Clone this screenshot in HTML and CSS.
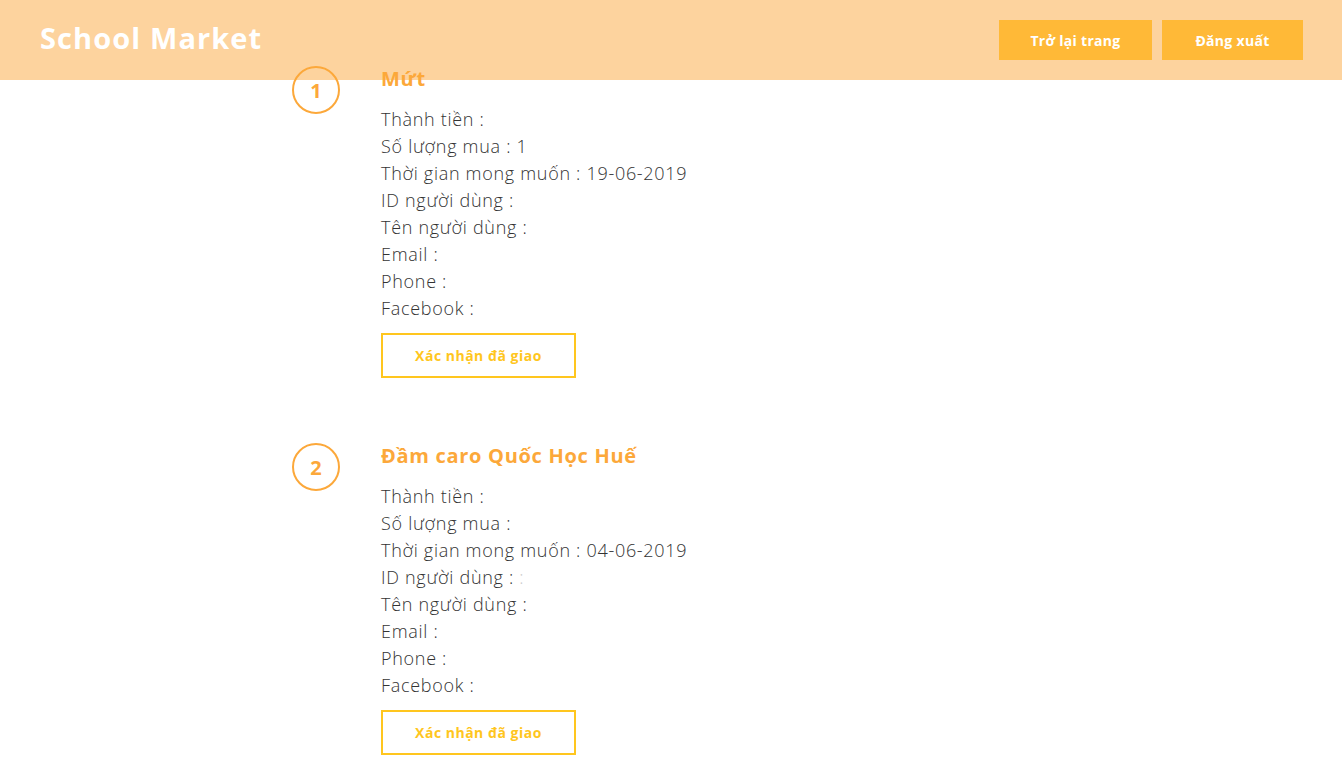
FILE: index.html
```html
<!DOCTYPE html>
<html lang="vi">
<head>
<meta charset="utf-8">
<title>School Market</title>
<link rel="stylesheet" href="styles.css">
</head>
<body>
<header class="topbar">
  <div class="brand">School Market</div>
  <nav class="actions">
    <a class="btn-top btn-back">Trở lại trang</a>
    <a class="btn-top btn-logout">Đăng xuất</a>
  </nav>
</header>
<main class="orders">
  <section class="order">
    <div class="num">1</div>
    <div class="info">
      <h2 class="name">Mứt</h2>
      <p class="line">Thành tiền :</p>
      <p class="line">Số lượng mua : 1</p>
      <p class="line">Thời gian mong muốn : 19-06-2019</p>
      <p class="line">ID người dùng :</p>
      <p class="line">Tên người dùng :</p>
      <p class="line">Email :</p>
      <p class="line">Phone :</p>
      <p class="line">Facebook :</p>
      <button class="confirm">Xác nhận đã giao</button>
    </div>
  </section>
  <section class="order">
    <div class="num">2</div>
    <div class="info">
      <h2 class="name">Đầm caro Quốc Học Huế</h2>
      <p class="line">Thành tiền :</p>
      <p class="line">Số lượng mua :</p>
      <p class="line">Thời gian mong muốn : 04-06-2019</p>
      <p class="line">ID người dùng : <span class="faint">:</span></p>
      <p class="line">Tên người dùng :</p>
      <p class="line">Email :</p>
      <p class="line">Phone :</p>
      <p class="line">Facebook :</p>
      <button class="confirm">Xác nhận đã giao</button>
    </div>
  </section>
</main>
</body>
</html>
```
FILE: styles.css
```css
* { box-sizing: border-box; }
html, body { margin: 0; padding: 0; background: #fff; }
body { font-family: "Open Sans", "Liberation Sans", sans-serif; color: #333; overflow: hidden; }

.topbar {
  height: 80px;
  background: #fdd39e;
  display: flex; align-items: center; justify-content: space-between;
  padding: 0 39px 0 40px;
}
.brand { color: #fff; font-weight: 700; font-size: 29px; letter-spacing: 1.1px; margin-bottom: 5px; }
.actions { display: flex; gap: 10px; }
.btn-top {
  height: 40px; display: flex; align-items: center; justify-content: center;
  background: #ffb937; color: #fff; font-weight: 700; font-size: 14px; letter-spacing: 0.3px;
}
.btn-back { width: 153px; }
.btn-logout { width: 141px; }

.orders {
  position: relative; margin-top: -15px;
  padding: 0 0 0 292px; display: flex; flex-direction: column; gap: 64px;
}
.order { display: flex; gap: 41px; align-items: flex-start; }
.num {
  width: 48px; height: 48px; border-radius: 50%; border: 2px solid #fca83a;
  color: #fca83a; font-weight: 700; font-size: 20px;
  display: flex; align-items: center; justify-content: center;
  margin-top: 1px; flex: none; background: transparent;
}
.info { display: flex; flex-direction: column; align-items: flex-start; }
.name { margin: 0 0 13px; font-size: 20px; line-height: 28px; font-weight: 700; color: #fca83a; letter-spacing: 0.7px; }
.line { margin: 0; font-size: 18px; line-height: 27px; font-weight: 300; color: #333; letter-spacing: 0.7px; }
.faint { color: #ccc; }
.confirm {
  margin-top: 11px; width: 195px; height: 45px; background: #fff;
  border: 2px solid #ffc61e; color: #ffc61e; font-family: inherit;
  font-weight: 700; font-size: 14px; letter-spacing: 0.5px; cursor: pointer;
}
```
